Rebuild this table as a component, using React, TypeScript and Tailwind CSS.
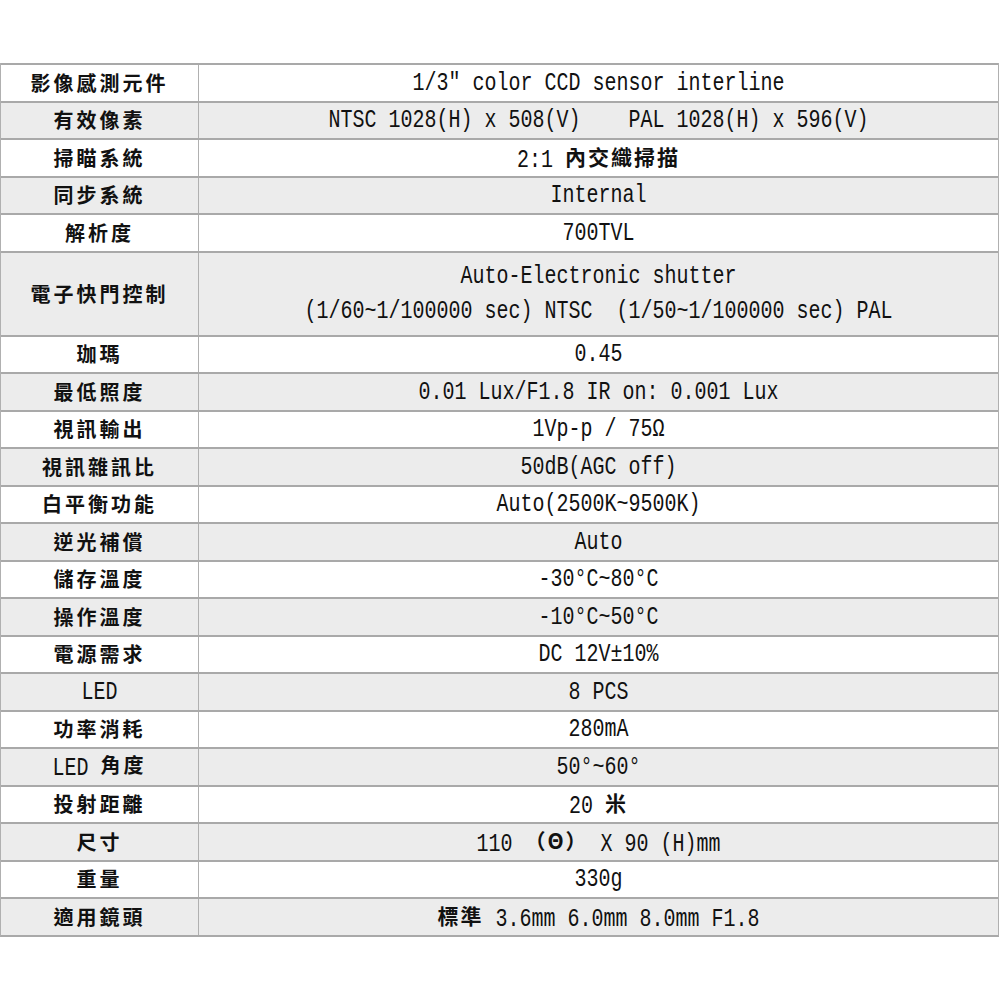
import React from "react";

type Row = { label: string; value: string | string[]; tall?: boolean };

const rows: Row[] = [
  { label: "影像感測元件", value: '1/3" color CCD sensor interline' },
  { label: "有效像素", value: "NTSC 1028(H) x 508(V)    PAL 1028(H) x 596(V)" },
  { label: "掃瞄系統", value: "2:1 內交織掃描" },
  { label: "同步系統", value: "Internal" },
  { label: "解析度", value: "700TVL" },
  {
    label: "電子快門控制",
    tall: true,
    value: ["Auto-Electronic shutter", "(1/60~1/100000 sec) NTSC  (1/50~1/100000 sec) PAL"],
  },
  { label: "珈瑪", value: "0.45" },
  { label: "最低照度", value: "0.01 Lux/F1.8 IR on: 0.001 Lux" },
  { label: "視訊輸出", value: "1Vp-p / 75Ω" },
  { label: "視訊雜訊比", value: "50dB(AGC off)" },
  { label: "白平衡功能", value: "Auto(2500K~9500K)" },
  { label: "逆光補償", value: "Auto" },
  { label: "儲存溫度", value: "-30°C~80°C" },
  { label: "操作溫度", value: "-10°C~50°C" },
  { label: "電源需求", value: "DC 12V±10%" },
  { label: "LED", value: "8 PCS" },
  { label: "功率消耗", value: "280mA" },
  { label: "LED 角度", value: "50°~60°" },
  { label: "投射距離", value: "20 米" },
  { label: "尺寸", value: "110 （Θ） X 90 (H)mm" },
  { label: "重量", value: "330g" },
  { label: "適用鏡頭", value: "標準 3.6mm 6.0mm 8.0mm F1.8" },
];

const cjkRe = /([\u0398\u3000-\u9fff\uff00-\uffef]+)/;

function Mixed({ text, label }: { text: string; label?: boolean }) {
  const parts = text.split(cjkRe).filter((p) => p.length > 0);
  return (
    <span className="whitespace-pre">
      {parts.map((p, i) =>
        cjkRe.test(p) ? (
          <span
            key={i}
            className={
              label
                ? "font-bold text-[20px] tracking-[3px] [font-family:'Noto_Sans_CJK_TC',sans-serif]"
                : "font-semibold text-[21px] tracking-[2px] [font-family:'Noto_Sans_CJK_TC',sans-serif]"
            }
          >
            {p}
          </span>
        ) : (
          <span
            key={i}
            className="inline-block origin-center scale-y-[1.3] text-[20px] [font-family:'Liberation_Mono',monospace]"
          >
            {p}
          </span>
        )
      )}
    </span>
  );
}

export default function App() {
  return (
    <div className="w-[1000px] h-[1000px] bg-white pt-[63px]">
      <div className="w-[999px] border-l border-r border-[#b0b0b0] border-b-2 border-b-[#a9a9a9]">
        {rows.map((r, i) => (
          <div
            key={i}
            className={`grid grid-cols-[198px_1fr] border-t-2 border-[#a9a9a9] ${
              r.tall ? "h-[84px]" : "h-[37.5px]"
            } ${i % 2 === 1 ? "bg-[#ececec]" : "bg-white"}`}
          >
            <div className="flex items-center justify-center border-r border-[#b0b0b0] text-[#111]">
              <Mixed text={r.label} label />
            </div>
            <div className="flex flex-col items-center justify-center gap-[5px] text-[#111]">
              {Array.isArray(r.value) ? (
                r.value.map((v, k) => <Mixed key={k} text={v} />)
              ) : (
                <Mixed text={r.value} />
              )}
            </div>
          </div>
        ))}
      </div>
    </div>
  );
}
